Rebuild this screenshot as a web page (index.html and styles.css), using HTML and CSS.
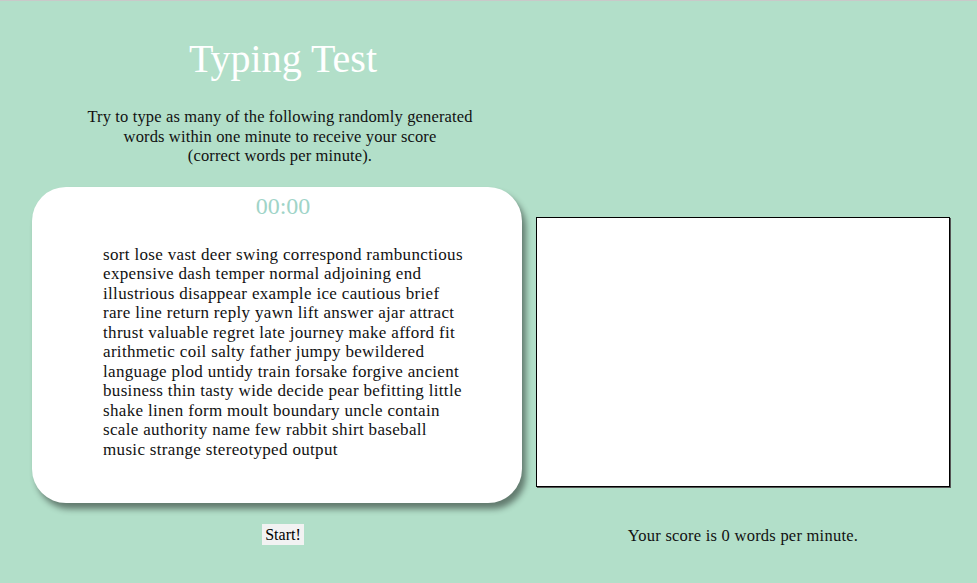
FILE: index.html
```html
<!DOCTYPE html>
<html lang="en">
<head>
<meta charset="utf-8">
<title>Typing Test</title>
<link rel="stylesheet" href="styles.css">
</head>
<body>
<main class="page">
  <section class="left">
    <h1 class="title">Typing Test</h1>
    <p class="intro">Try to type as many of the following randomly generated<br>words within one minute to receive your score<br>(correct words per minute).</p>
    <div class="card">
      <div class="timer">00:00</div>
      <p class="words">sort lose vast deer swing correspond rambunctious<br>expensive dash temper normal adjoining end<br>illustrious disappear example ice cautious brief<br>rare line return reply yawn lift answer ajar attract<br>thrust valuable regret late journey make afford fit<br>arithmetic coil salty father jumpy bewildered<br>language plod untidy train forsake forgive ancient<br>business thin tasty wide decide pear befitting little<br>shake linen form moult boundary uncle contain<br>scale authority name few rabbit shirt baseball<br>music strange stereotyped output</p>
    </div>
    <div class="actions"><button class="start" type="button">Start!</button></div>
  </section>
  <section class="right">
    <textarea class="entry" autofocus></textarea>
    <p class="score">Your score is 0 words per minute.</p>
  </section>
</main>
</body>
</html>
```
FILE: styles.css
```css
html, body {
  margin: 0;
  padding: 0;
}
body {
  background: #b2dfc9;
  border-top: 1px solid #c9c9c9;
  height: 582px;
  overflow: hidden;
  font-family: "Liberation Serif", "Times New Roman", serif;
  color: #111;
}
.page {
  display: flex;
  padding-left: 32px;
}
.left {
  width: 502px;
  display: flex;
  flex-direction: column;
  align-items: flex-start;
}
.title {
  align-self: stretch;
  text-align: center;
  margin: 35px 0 0;
  font-size: 40px;
  line-height: 46px;
  font-weight: normal;
  color: #fff;
}
.intro {
  align-self: stretch;
  text-align: center;
  margin: 25px 0 0;
  padding-right: 6px;
  font-size: 16.5px;
  line-height: 19.5px;
  letter-spacing: 0.14px;
}
.card {
  margin-top: 21px;
  width: 490px;
  box-sizing: border-box;
  padding: 5px 59px 44px 71px;
  background: #fff;
  border-radius: 34px;
  box-shadow: 4px 6px 6px rgba(0, 0, 0, 0.45);
}
.timer {
  text-align: center;
  font-size: 24px;
  line-height: 28px;
  color: #a0d4c8;
}
.words {
  margin: 25px 0 0;
  font-size: 17px;
  line-height: 19.5px;
  letter-spacing: 0.33px;
  white-space: nowrap;
}
.actions {
  align-self: stretch;
  display: flex;
  justify-content: center;
  margin-top: 21px;
}
.start {
  font-family: inherit;
  font-size: 16px;
  line-height: 19px;
  color: #000;
  background: #f2f2f2;
  border: none;
  padding: 1px 3px;
}
.right {
  width: 414px;
  margin-left: 2px;
  display: flex;
  flex-direction: column;
}
.entry {
  margin-top: 216px;
  width: 414px;
  height: 270px;
  box-sizing: border-box;
  border: 1px solid #000;
  box-shadow: 1px 1px 0 #555;
  background: #fff;
  resize: none;
  outline: none;
  padding: 2px;
}
.score {
  margin: 39px 0 0;
  text-align: center;
  font-size: 16.5px;
  line-height: 19.5px;
  letter-spacing: 0.24px;
}
```
